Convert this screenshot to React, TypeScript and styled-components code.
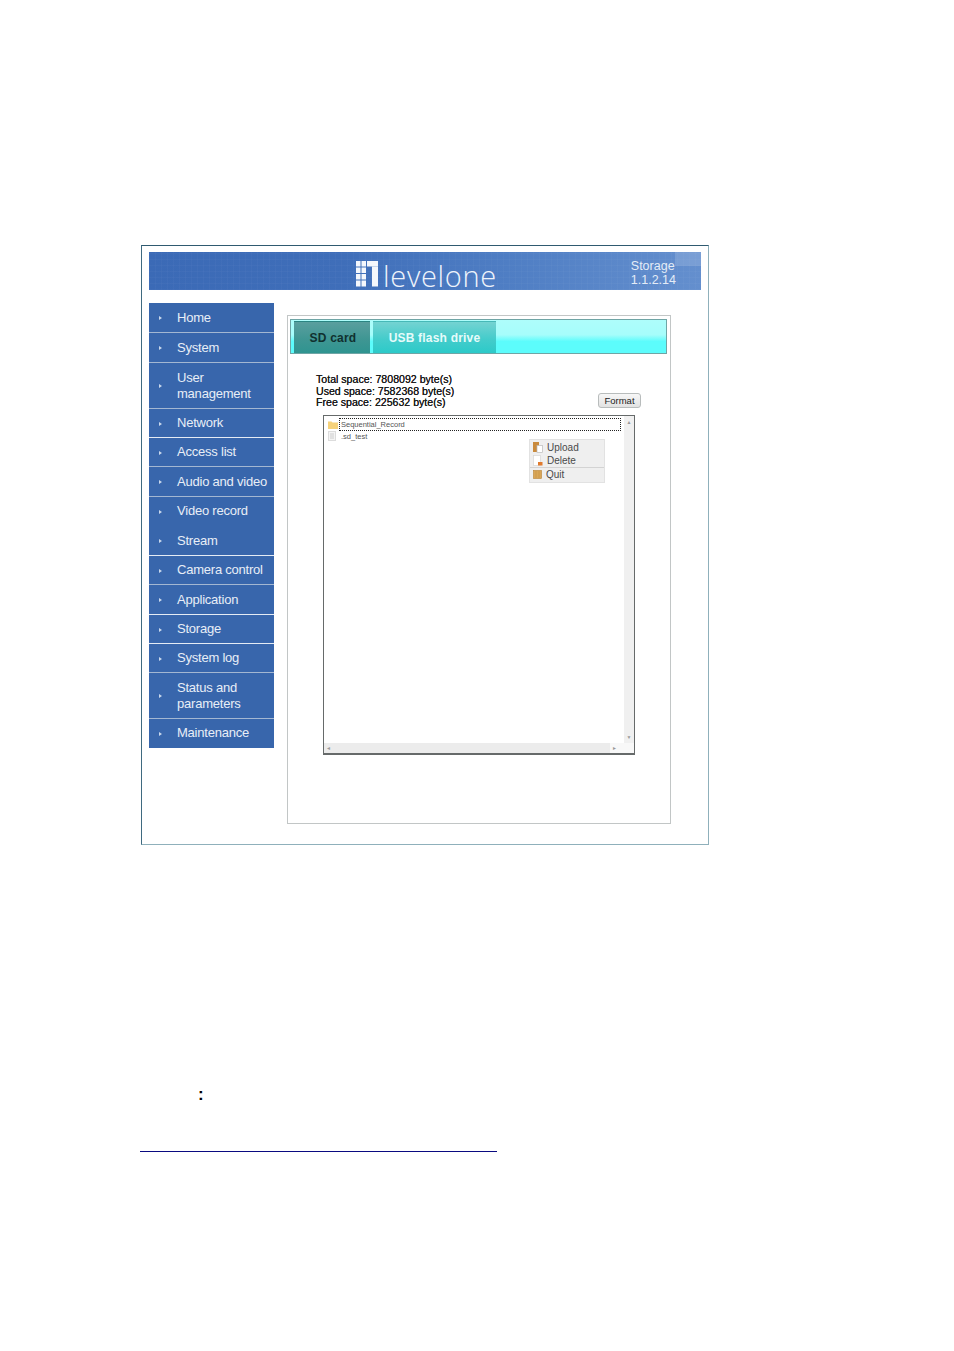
import React from 'react';
import styled, { createGlobalStyle } from 'styled-components';

type MenuEntry = {
  label: string[];
  height: number;
  line?: 'none' | 'bright';
};

const menu: MenuEntry[] = [
  { label: ['Home'], height: 30 },
  { label: ['System'], height: 30 },
  { label: ['User', 'management'], height: 46 },
  { label: ['Network'], height: 29, line: 'bright' },
  { label: ['Access list'], height: 29 },
  { label: ['Audio and video'], height: 30 },
  { label: ['Video record'], height: 29, line: 'none' },
  { label: ['Stream'], height: 30, line: 'bright' },
  { label: ['Camera control'], height: 29 },
  { label: ['Application'], height: 30, line: 'bright' },
  { label: ['Storage'], height: 29, line: 'bright' },
  { label: ['System log'], height: 29 },
  { label: ['Status and', 'parameters'], height: 46 },
  { label: ['Maintenance'], height: 29, line: 'none' },
];

const LogoMark = () => (
  <svg width="22" height="26" viewBox="0 0 22 26">
    <g fill="#f4f7fc">
      <rect x="0" y="0" width="4.5" height="5.5" />
      <rect x="5.5" y="0" width="4.5" height="5.5" />
      <rect x="11" y="0" width="11" height="5.5" />
      <rect x="0" y="6.5" width="4.5" height="5.5" />
      <rect x="5.5" y="6.5" width="4.5" height="5.5" />
      <rect x="0" y="13" width="4.5" height="5.5" />
      <rect x="5.5" y="13" width="4.5" height="5.5" />
      <rect x="0" y="19.5" width="4.5" height="6" />
      <rect x="5.5" y="19.5" width="4.5" height="6" />
      <rect x="16" y="5.5" width="6" height="20" />
    </g>
  </svg>
);

const FolderIcon = () => (
  <svg width="10" height="9" viewBox="0 0 10 9">
    <path d="M0 1.5h3.5l1 1H10V9H0z" fill="#f6d27a" />
  </svg>
);

const FileIcon = () => (
  <svg width="8" height="10" viewBox="0 0 8 10">
    <rect x="0.5" y="0.5" width="7" height="9" fill="#f4f4f4" stroke="#dcdcdc" />
    <path d="M2 3h4M2 5h4M2 7h4" stroke="#c4c4c4" strokeWidth="0.8" />
  </svg>
);

const UploadIcon = () => (
  <svg width="10" height="11" viewBox="0 0 10 11">
    <rect x="0" y="0" width="6" height="10" fill="#c98a3c" />
    <rect x="4" y="3.5" width="5.5" height="7" fill="#fff" stroke="#b9b9b9" strokeWidth="0.7" />
  </svg>
);

const DeleteIcon = () => (
  <svg width="10" height="11" viewBox="0 0 10 11">
    <rect x="0.5" y="0.5" width="7" height="10" fill="#fff" stroke="#d6d6d6" strokeWidth="0.7" />
    <rect x="5" y="7" width="4.5" height="3.5" fill="#e07b2e" />
  </svg>
);

const QuitIcon = () => (
  <svg width="9" height="9" viewBox="0 0 9 9">
    <rect x="0.5" y="0.5" width="8" height="8" fill="#d9a657" stroke="#b98232" strokeWidth="0.6" />
    <path d="M3 1v7M6 1v7" stroke="#c3913f" strokeWidth="0.6" />
  </svg>
);

const App: React.FC = () => {
  return (
    <Page>
      <GlobalStyle />
      <Frame>
        <Banner>
          <BannerLight />
          <Logo>
            <LogoMark />
            <LogoText>levelone</LogoText>
          </Logo>
          <BannerInfo>
            <span>Storage</span>
            <span>1.1.2.14</span>
          </BannerInfo>
        </Banner>
        <Body>
          <Sidebar>
            {menu.map((item) => (
              <MenuItem
                key={item.label.join(' ')}
                $height={item.height}
                $line={item.line}
              >
                <MenuArrow />
                <MenuLabel>
                  {item.label.map((line) => (
                    <span key={line}>{line}</span>
                  ))}
                </MenuLabel>
              </MenuItem>
            ))}
          </Sidebar>
          <Panel>
            <TabBar>
              <Tab $active>SD card</Tab>
              <Tab>USB flash drive</Tab>
            </TabBar>
            <InfoRow>
              <SpaceInfo>
                <span>Total space: 7808092 byte(s)</span>
                <span>Used space: 7582368 byte(s)</span>
                <span>Free space: 225632 byte(s)</span>
              </SpaceInfo>
              <FormatButton>Format</FormatButton>
            </InfoRow>
            <Explorer>
              <ExplorerMain>
                <FileList>
                  <FileRow>
                    <FolderIcon />
                    <FileName $selected>Sequential_Record</FileName>
                  </FileRow>
                  <FileRow>
                    <FileIcon />
                    <FileName>.sd_test</FileName>
                  </FileRow>
                </FileList>
                <VScroll>
                  <ScrollArrow>▲</ScrollArrow>
                  <ScrollArrow>▼</ScrollArrow>
                </VScroll>
              </ExplorerMain>
              <HScroll>
                <ScrollArrow>◄</ScrollArrow>
                <ScrollArrow>►</ScrollArrow>
              </HScroll>
              <ContextMenu>
                <ContextItem>
                  <UploadIcon />
                  Upload
                </ContextItem>
                <ContextItem>
                  <DeleteIcon />
                  Delete
                </ContextItem>
                <ContextItem $separated>
                  <QuitIcon />
                  Quit
                </ContextItem>
              </ContextMenu>
            </Explorer>
          </Panel>
        </Body>
      </Frame>
      <Colon>:</Colon>
      <FootnoteRule />
    </Page>
  );
};

const GlobalStyle = createGlobalStyle`
  html, body {
    margin: 0;
    padding: 0;
    background: #fff;
    font-family: "Liberation Sans", Arial, sans-serif;
  }
`;

const Page = styled.div`
  width: 954px;
  height: 1351px;
  box-sizing: border-box;
  padding: 245px 0 0 141px;
  overflow: hidden;
`;

const Frame = styled.div`
  width: 568px;
  height: 600px;
  box-sizing: border-box;
  padding: 6px 7px;
  border: 1px solid #8fb0bb;
  border-top-color: #2f5a70;
  border-left-color: #3f6a80;
  background: #fff;
`;

const Banner = styled.div`
  position: relative;
  height: 38px;
  display: flex;
  align-items: center;
  padding: 0 25px 0 207px;
  color: #fff;
  background-color: #3f6db8;
  background-image: repeating-linear-gradient(
      90deg,
      rgba(255, 255, 255, 0.025) 0 1px,
      transparent 1px 6px
    ),
    repeating-linear-gradient(
      0deg,
      rgba(255, 255, 255, 0.025) 0 1px,
      transparent 1px 6px
    ),
    linear-gradient(90deg, #3b6ab6 0%, #3f6eb9 35%, #4f7ec4 65%, #648fce 100%);
`;

const BannerLight = styled.div`
  position: absolute;
  top: 0;
  right: 0;
  width: 26px;
  height: 14px;
  background: rgba(255, 255, 255, 0.14);
`;

const Logo = styled.div`
  display: flex;
  align-items: flex-end;
  gap: 5px;
  margin-top: 5px;
`;

const LogoText = styled.span`
  font-family: "Open Sans", sans-serif;
  font-size: 29px;
  font-weight: 300;
  line-height: 26px;
  letter-spacing: 0.7px;
  margin-bottom: -2px;
  color: #eef3fb;
`;

const BannerInfo = styled.div`
  margin-left: auto;
  display: flex;
  flex-direction: column;
  font-size: 12.5px;
  line-height: 14px;
  margin-top: 4px;
  color: #e4ecf7;
`;

const Body = styled.div`
  display: flex;
  align-items: flex-start;
  margin-top: 13px;
`;

const Sidebar = styled.nav`
  width: 125px;
  display: flex;
  flex-direction: column;
  background: #3866ac;
`;

const lineColors = {
  none: '#3866ac',
  bright: '#e4ebf5',
  normal: '#a3b7d2',
};

const MenuItem = styled.div<{ $height: number; $line?: 'none' | 'bright' }>`
  height: ${(p) => p.$height}px;
  box-sizing: border-box;
  display: flex;
  align-items: center;
  padding: 1px 0 0 10px;
  color: #e8eef7;
  border-bottom: 1px solid ${(p) => lineColors[p.$line ?? 'normal']};
`;

const MenuArrow = styled.span`
  width: 0;
  height: 0;
  border-left: 3px solid #c9d8ec;
  border-top: 2px solid transparent;
  border-bottom: 2px solid transparent;
`;

const MenuLabel = styled.div`
  margin-left: 15px;
  display: flex;
  flex-direction: column;
  font-size: 13px;
  line-height: 16.5px;
  letter-spacing: -0.22px;
  white-space: nowrap;
`;

const Panel = styled.section`
  position: relative;
  width: 384px;
  height: 509px;
  margin: 12px 0 0 13px;
  box-sizing: border-box;
  padding: 3px 3px 3px 2px;
  border: 1px solid #c2c6c6;
`;

const TabBar = styled.div`
  height: 35px;
  box-sizing: border-box;
  display: flex;
  align-items: flex-end;
  gap: 3px;
  padding-left: 3px;
  border: 1px solid #6fa5a5;
  background: linear-gradient(180deg, #aefdfb 0%, #a6fdfb 45%, #5cfcfc 65%, #5cfcfc 100%);
`;

const Tab = styled.div<{ $active?: boolean }>`
  width: ${(p) => (p.$active ? '76px' : '123px')};
  height: 32px;
  box-sizing: border-box;
  display: flex;
  align-items: center;
  justify-content: center;
  padding-left: ${(p) => (p.$active ? '2px' : '0')};
  white-space: nowrap;
  font-size: 12px;
  font-weight: bold;
  letter-spacing: 0.2px;
  color: ${(p) => (p.$active ? '#10302f' : '#e6fbfa')};
  border-top: 1px solid ${(p) => (p.$active ? '#2a8583' : '#46b9b8')};
  background: ${(p) =>
    p.$active
      ? 'linear-gradient(180deg, #5a9f9f 0%, #3f9693 55%, #2f9490 100%)'
      : 'linear-gradient(180deg, #74d3d2 0%, #44cccb 55%, #2ccac9 100%)'};
`;

const InfoRow = styled.div`
  display: flex;
  align-items: flex-end;
  justify-content: space-between;
  margin: 20px 26px 0 26px;
`;

const SpaceInfo = styled.div`
  display: flex;
  flex-direction: column;
  font-size: 10.6px;
  line-height: 11.5px;
  color: #1a1a1a;
  text-shadow: 0 0 0.5px #1a1a1a;
  white-space: nowrap;
`;

const FormatButton = styled.button`
  width: 43px;
  height: 15px;
  padding: 0;
  margin-bottom: 1px;
  font-family: inherit;
  font-size: 9.5px;
  color: #222;
  border: 1px solid #b8bcbc;
  border-radius: 3px;
  background: linear-gradient(180deg, #f7f7f7, #e2e2e2);
`;

const Explorer = styled.div`
  position: relative;
  width: 312px;
  height: 340px;
  box-sizing: border-box;
  margin: 6px 0 0 33px;
  display: flex;
  flex-direction: column;
  border: 1px solid #666a6a;
  border-width: 1px 1px 2px 1px;
`;

const ExplorerMain = styled.div`
  flex: 1;
  display: flex;
  min-height: 0;
`;

const FileList = styled.div`
  flex: 1;
  padding: 3px 4px;
  display: flex;
  flex-direction: column;
  gap: 1px;
`;

const FileRow = styled.div`
  height: 11px;
  display: flex;
  align-items: center;
  gap: 2px;
`;

const FileName = styled.span<{ $selected?: boolean }>`
  flex: ${(p) => (p.$selected ? 1 : 'none')};
  height: 11px;
  line-height: 11.5px;
  box-sizing: border-box;
  padding-left: 1px;
  margin-left: ${(p) => (p.$selected ? '0' : '2px')};
  font-size: 7.5px;
  color: #555;
  outline: ${(p) => (p.$selected ? '1px dotted #222' : 'none')};
`;

const VScroll = styled.div`
  width: 10px;
  display: flex;
  flex-direction: column;
  justify-content: space-between;
  align-items: center;
  padding: 3px 0;
  background: #f0f0f0;
`;

const HScroll = styled.div`
  height: 10px;
  flex: none;
  display: flex;
  justify-content: space-between;
  align-items: center;
  padding: 0 17px 0 2px;
  background: linear-gradient(90deg, #ececec 0 286px, #f8f8f8 286px);
`;

const ScrollArrow = styled.span`
  font-size: 5px;
  line-height: 6px;
  color: #9a9a9a;
`;

const ContextMenu = styled.div`
  position: absolute;
  top: 23px;
  left: 205px;
  width: 76px;
  height: 44px;
  box-sizing: border-box;
  padding-top: 1px;
  display: flex;
  flex-direction: column;
  background: #efefef;
  border: 1px solid #e2e2e2;
`;

const ContextItem = styled.div<{ $separated?: boolean }>`
  height: 13.5px;
  display: flex;
  align-items: center;
  gap: 4px;
  padding-left: 3px;
  font-size: 10px;
  color: #4a4a4a;
  border-top: ${(p) => (p.$separated ? '1px solid #d3d3d3' : 'none')};
`;

const Colon = styled.div`
  margin: 239px 0 0 57px;
  height: 22px;
  font-size: 17px;
  font-weight: bold;
  line-height: 22px;
  color: #000;
`;

const FootnoteRule = styled.div`
  width: 357px;
  height: 1px;
  margin: 45px 0 0 -1px;
  background: #0a0a80;
`;

export default App;
